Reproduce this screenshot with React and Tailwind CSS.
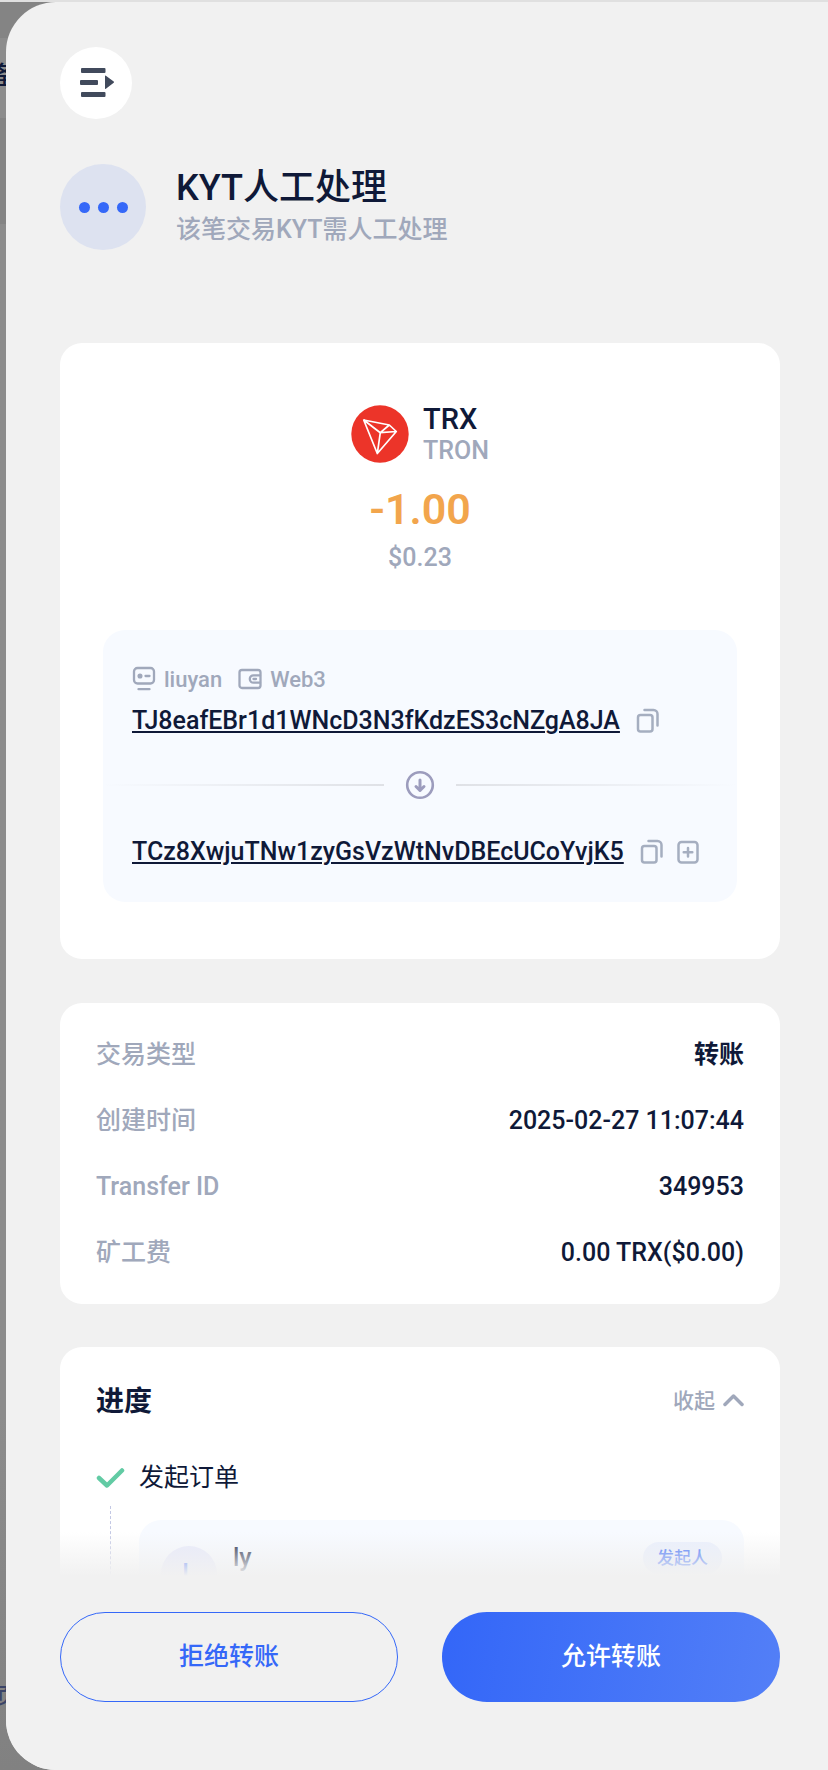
import React from "react";

const details = [
  { label: "交易类型", value: "转账", bold: true },
  { label: "创建时间", value: "2025-02-27 11:07:44" },
  { label: "Transfer ID", value: "349953" },
  { label: "矿工费", value: "0.00 TRX($0.00)" },
];

function CollapseIcon() {
  return (
    <svg width="36" height="30" viewBox="-2 0 36 30" fill="#414a5c" aria-hidden="true">
      <rect x="1" y="0" width="24.500" height="5" rx="1" />
      <rect x="0" y="12" width="18" height="5" rx="1" />
      <rect x="1" y="24" width="24.500" height="5" rx="1" />
      <path d="M25 8.200v12.200c0 .5.5.7.9.4l7.800-6.100c.4-.3.4-.8 0-1.100l-7.800-5.900c-.4-.3-.9 0-.9.5z" />
    </svg>
  );
}

function TronLogo() {
  return (
    <svg width="58" height="58" viewBox="0 0 58 58" aria-hidden="true">
      <circle cx="29" cy="29" r="28.700" fill="#ec3429" />
      <path
        d="M12.700 15l25.600 5 7 6.500L26.300 48.500zM12.700 15l16.600 12.700 9-7.700M29.300 27.700l16-1.200M29.300 27.700l-3 20.800"
        fill="none"
        stroke="#fff"
        strokeWidth="1.700"
        strokeLinejoin="round"
      />
    </svg>
  );
}

function RobotIcon() {
  return (
    <svg width="24" height="26" viewBox="0 0 24 26" fill="none" stroke="#a0a8bb" strokeWidth="2.300" strokeLinecap="round" aria-hidden="true">
      <rect x="2" y="2" width="20" height="15.500" rx="3.500" />
      <circle cx="8" cy="10" r="1.400" fill="#a0a8bb" />
      <path d="M13.500 10h4M6.500 23.200h11" />
    </svg>
  );
}

function WalletIcon() {
  return (
    <svg width="24" height="26" viewBox="0 0 24 26" fill="none" stroke="#a0a8bb" strokeWidth="2.300" strokeLinejoin="round" aria-hidden="true">
      <rect x="1.500" y="4" width="21" height="18" rx="2.500" />
      <path d="M22 9.300h-6.500a3.700 3.700 0 0 0 0 7.400H22M15.500 13h2.500" strokeLinecap="round" />
    </svg>
  );
}

function CopyIcon() {
  return (
    <svg width="24" height="26" viewBox="0 0 24 26" fill="none" stroke="#a5aec0" strokeWidth="2.500" strokeLinecap="round" strokeLinejoin="round" aria-hidden="true">
      <rect x="2" y="7" width="14.500" height="16.500" rx="2.500" />
      <path d="M8.500 2h9a4 4 0 0 1 4 4v11.500" />
    </svg>
  );
}

function AddIcon() {
  return (
    <svg width="24" height="26" viewBox="0 0 24 26" fill="none" stroke="#a5aec0" strokeWidth="2.500" strokeLinecap="round" aria-hidden="true">
      <rect x="2.500" y="3" width="19" height="20.500" rx="3" />
      <path d="M12 9v8.500M7.700 13.200h8.600" />
    </svg>
  );
}

function DownIcon() {
  return (
    <svg width="30" height="30" viewBox="0 0 30 30" fill="none" stroke="#9c9cbd" strokeLinecap="round" strokeLinejoin="round" aria-hidden="true">
      <circle cx="15" cy="15" r="12.800" strokeWidth="2.600" />
      <path d="M15 10v10.500M11 16.500l4 4 4-4" strokeWidth="3" />
    </svg>
  );
}

function Address({ value, canAdd }) {
  return (
    <div className="flex h-9 items-center gap-3">
      <a href="#address" className="mr-1 text-[25px] leading-9 underline decoration-2 underline-offset-2">
        {value}
      </a>
      <button type="button" aria-label="复制地址">
        <CopyIcon />
      </button>
      {canAdd && (
        <button type="button" aria-label="添加地址">
          <AddIcon />
        </button>
      )}
    </div>
  );
}

export default function App() {
  return (
    <div className="flex h-screen flex-col overflow-hidden bg-[#888888] pt-0.5 font-['Roboto','Noto_Sans_CJK_SC',sans-serif] font-medium text-[#0f1938] shadow-[inset_0_2px_0_#e0e0e0]">
      <div className="relative min-h-0 flex-1 pl-1.5">
        <div className="absolute inset-y-0 left-0 w-14 overflow-hidden bg-linear-to-b from-[#8c8c8c] from-80% to-[#818181]">
          <div className="h-9 bg-[#848484]" />
          <div className="h-20 bg-[#8c8c8c]" />
          <div className="h-[106px] bg-[#848484]" />
          <span className="absolute top-14 -left-2 text-[25px] leading-9">备</span>
          <span className="absolute bottom-14 -left-1 text-[22px] leading-9 text-[#3b4468]">页</span>
        </div>

        <main className="relative flex h-full flex-col overflow-hidden rounded-l-[50px] bg-[#f1f1f1]">
          <div className="min-h-0 flex-1 overflow-hidden pt-[45px] pr-12 pl-[54px]">
            <button type="button" aria-label="收起面板" className="flex size-[72px] items-center justify-center rounded-full bg-white">
              <CollapseIcon />
            </button>

            <header className="mt-[45px] flex h-[86px] items-center gap-[30px]">
              <div className="flex size-[86px] shrink-0 items-center justify-center gap-2 rounded-full bg-[#dde2f0]">
                <i className="size-[11px] rounded-full bg-[#3568f8]" />
                <i className="size-[11px] rounded-full bg-[#3568f8]" />
                <i className="size-[11px] rounded-full bg-[#3568f8]" />
              </div>
              <div className="pt-0.5">
                <h1 className="text-4xl leading-[44px]">KYT人工处理</h1>
                <p className="text-[25px] leading-10 text-[#a0a8bb]">该笔交易KYT需人工处理</p>
              </div>
            </header>

            <section className="mt-[93px] rounded-[22px] bg-white px-[43px] pt-[58px] pb-[57px]">
              <div className="flex items-center justify-center gap-3.5">
                <TronLogo />
                <div className="pt-0.5">
                  <div className="text-[29px] leading-8">TRX</div>
                  <div className="text-[25px] leading-8 text-[#a0a8bb]">TRON</div>
                </div>
              </div>
              <div className="mt-3 text-center text-[43px] leading-[60px] font-semibold text-[#f2a54c]">-1.00</div>
              <div className="text-center text-[25px] leading-[38px] text-[#a0a8bb]">$0.23</div>

              <div className="mt-[53px] rounded-[22px] bg-[#f7faff] pt-[31px] pb-8">
                <div className="flex h-9 items-center gap-2 px-[29px] text-[22px] text-[#a0a8bb]">
                  <RobotIcon />
                  <span>liuyan</span>
                  <span className="ml-2 flex">
                    <WalletIcon />
                  </span>
                  <span>Web3</span>
                </div>
                <div className="mt-1.5 px-[29px]">
                  <Address value="TJ8eafEBr1d1WNcD3N3fKdzES3cNZgA8JA" />
                </div>
                <div className="mt-[31px] mb-[34px] flex items-center gap-[21px]">
                  <div className="h-0.5 flex-1 bg-linear-to-l from-[#dfe1e6] to-transparent" />
                  <DownIcon />
                  <div className="h-0.5 flex-1 bg-linear-to-r from-[#dfe1e6] to-transparent" />
                </div>
                <div className="px-[29px]">
                  <Address value="TCz8XwjuTNw1zyGsVzWtNvDBEcUCoYvjK5" canAdd />
                </div>
              </div>
            </section>

            <section className="mt-11 rounded-[22px] bg-white px-9 pt-[34px] pb-[33px]">
              <dl className="flex flex-col gap-[30px] text-[25px] leading-9">
                {details.map((row) => (
                  <div key={row.label} className="flex justify-between">
                    <dt className="text-[#a0a8bb]">{row.label}</dt>
                    <dd className={row.bold ? "font-bold" : "font-medium"}>{row.value}</dd>
                  </div>
                ))}
              </dl>
            </section>

            <section className="mt-[43px] rounded-[22px] bg-white px-9 pt-[37px] pb-9">
              <div className="flex h-9 items-center justify-between">
                <h2 className="text-[28px] leading-9 font-bold">进度</h2>
                <button type="button" className="flex items-center gap-2 text-[21px] text-[#a0a8bb]">
                  收起
                  <svg width="21" height="18" viewBox="0 0 21 18" fill="none" stroke="#a0a8bb" strokeWidth="3.500" strokeLinecap="round" strokeLinejoin="round" aria-hidden="true">
                    <path d="M2 11.500l8.500-8.500 8.500 8.500" />
                  </svg>
                </button>
              </div>
              <div className="mt-10 flex h-9 items-center gap-3.5">
                <svg width="29" height="22" viewBox="0 0 29 22" fill="none" stroke="#62cba4" strokeWidth="4.500" strokeLinecap="round" strokeLinejoin="round" aria-hidden="true">
                  <path d="M3 11l8 7.500L26 3.500" />
                </svg>
                <span className="text-[25px] leading-9 font-normal">发起订单</span>
              </div>
              <div className="flex">
                <div className="mt-2.5 ml-3.5 w-[29px] border-l border-dashed border-[#c3c8e4]" />
                <div className="mt-6 flex h-40 flex-1 gap-4 rounded-[22px] bg-[#f7faff] px-[22px] pt-[22px]">
                  <div className="mt-1 flex size-14 items-center justify-center rounded-full bg-[#e6e9fb] text-[25px] text-[#3568f8]">L</div>
                  <div className="text-[25px] leading-8">ly</div>
                  <div className="ml-auto h-8 rounded-full bg-[#e9effd] px-3.5 text-[17px] leading-8 text-[#3568f8]">发起人</div>
                </div>
              </div>
            </section>
          </div>

          <footer className="relative grid grid-cols-2 gap-11 bg-[#f1f1f1] pt-9 pr-12 pb-[68px] pl-[54px] text-[25px] font-medium">
            <div className="pointer-events-none absolute inset-x-0 bottom-full h-11 bg-linear-to-t from-[#f1f1f1] to-transparent" />
            <button type="button" className="h-[90px] rounded-full border border-[#3568f8] text-[#3568f8]">
              拒绝转账
            </button>
            <button type="button" className="h-[90px] rounded-full bg-linear-100 from-[#3366f8] to-[#537ff7] text-white">
              允许转账
            </button>
          </footer>
        </main>
      </div>
    </div>
  );
}
